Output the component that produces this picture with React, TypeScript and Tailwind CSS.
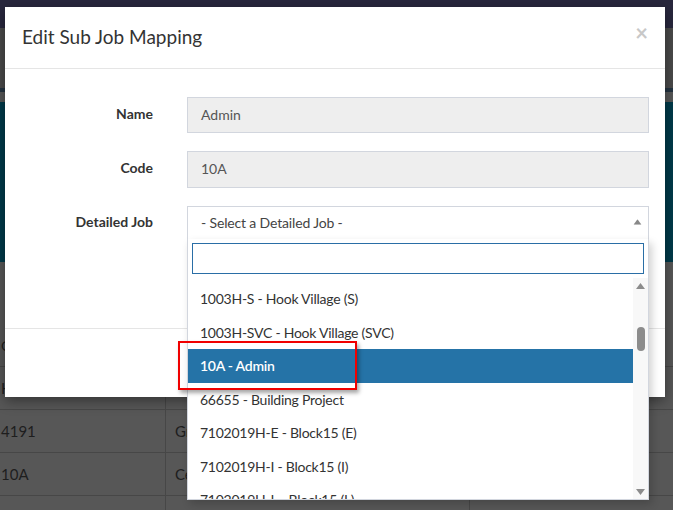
import React from 'react'

// Edit Sub Job Mapping modal, with the Detailed Job select opened over the page.

const options = [
  '1003H-S - Hook Village (S)',
  '1003H-SVC - Hook Village (SVC)',
  '10A - Admin',
  '66655 - Building Project',
  '7102019H-E - Block15 (E)',
  '7102019H-I - Block15 (I)',
  '7102019H-L - Block15 (L)',
]

const SELECTED = '10A - Admin'

function Backdrop() {
  return (
    <div className="flex flex-col">
      <div className="h-[28px] bg-[#28273d]" />
      <div className="h-[60px] bg-[#4a4a4a]" />
      <div className="h-[4px] bg-[#243341]" />
      <div className="h-[10px] bg-[#575757]" />
      <div className="h-[160px] bg-[#003a4a]" />
      <div className="h-[105px] bg-[#575757] border-b border-[#474747] flex items-end pb-[10px] text-[14px] text-[#1e1e1e]">
        <span className="pl-[1px]">C</span>
      </div>
      {[
        ['H', ''],
        ['4191', 'Gr'],
        ['10A', 'Ce'],
        ['', ''],
      ].map(([a, b], i) => (
        <div
          key={i}
          className="h-[43px] flex border-b border-[#474747] bg-[#575757] text-[15px] text-[#1e1e1e]"
        >
          <div className="w-[166px] flex items-center border-r border-[#474747] overflow-hidden">
            <span className="pl-[1px]">{a}</span>
          </div>
          <div className="w-[304px] flex items-center pl-[9px] border-r border-[#474747]">{b}</div>
          <div className="flex-1" />
        </div>
      ))}
    </div>
  )
}

function Triangle({ dir, className }: { dir: 'up' | 'down'; className?: string }) {
  return (
    <svg width="9" height="6" viewBox="0 0 9 6" className={className}>
      {dir === 'up' ? (
        <path d="M0 6 L4.5 0 L9 6 Z" fill="currentColor" />
      ) : (
        <path d="M0 0 L4.5 6 L9 0 Z" fill="currentColor" />
      )}
    </svg>
  )
}

function Dropdown() {
  return (
    <div className="absolute -left-px top-full w-[462px] h-[261px] bg-white border border-t-0 border-[#d2d6de] shadow-[3px_4px_8px_rgba(0,0,0,0.18)] flex flex-col">
      <div className="p-[4px]">
        <div className="h-[31px] border border-[#2a6ea6] bg-white" />
      </div>
      <div className="flex-1 flex overflow-hidden">
        <ul className="flex-1 pt-[4px] overflow-hidden tracking-[-0.25px]">
          {options.map((o) => (
            <li
              key={o}
              className={
                o === SELECTED
                  ? 'h-[33.5px] flex items-center pl-[12px] bg-[#2573a7] text-white font-semibold'
                  : 'h-[33.5px] flex items-center pl-[12px] text-[#333]'
              }
            >
              {o}
            </li>
          ))}
        </ul>
        <div className="w-[15px] bg-[#f8f8f8] flex flex-col items-center pt-[5px] pb-[4px] text-[#8c8c8c]">
          <Triangle dir="up" />
          <div className="mt-[38px] w-[8px] h-[24px] rounded-full bg-[#8c8c8c]" />
          <div className="flex-1" />
          <Triangle dir="down" />
        </div>
      </div>
    </div>
  )
}

export default function App() {
  return (
    <div
      className="relative w-[673px] h-[510px] overflow-hidden bg-[#575757] text-[14px]"
      style={{ fontFamily: 'Lato, "Open Sans", sans-serif' }}
    >
      <Backdrop />

      <div className="absolute left-[5px] top-[7px] w-[660px] h-[390px] bg-white shadow-[0_4px_12px_rgba(0,0,0,0.4)] flex flex-col">
        <div className="h-[62px] border-b border-[#e5e5e5] flex items-center justify-between pl-[17px] pr-[17px] shrink-0">
          <h4 className="text-[19px] text-[#333]">Edit Sub Job Mapping</h4>
          <span className="text-[22px] leading-none font-bold text-[#c8c8c8] -mt-[9px]">×</span>
        </div>

        <div className="h-[259px] pt-[28px] pr-[16px] shrink-0">
          <div className="grid grid-cols-[148px_1fr] gap-x-[34px] gap-y-[18px] items-center">
            <label className="text-right font-bold text-[#333] -mt-[4px]">Name</label>
            <div className="h-[36px] border border-[#d2d6de] bg-[#eeeeee] flex items-center px-[13px] pb-[2px] text-[#555]">
              Admin
            </div>

            <label className="text-right font-bold text-[#333] -mt-[4px]">Code</label>
            <div className="h-[37px] border border-[#d2d6de] bg-[#eeeeee] flex items-center px-[13px] pb-[2px] text-[#555]">
              10A
            </div>

            <label className="text-right font-bold text-[#333] -mt-[4px]">Detailed Job</label>
            <div className="relative h-[34px] border border-[#d2d6de] bg-white flex items-center justify-between pl-[13px] pr-[6px] pb-[2px] text-[#444] tracking-[-0.15px]">
              <span>- Select a Detailed Job -</span>
              <Triangle dir="up" className="text-[#888] scale-90" />
              <Dropdown />
            </div>
          </div>
        </div>

        <div className="flex-1 border-t border-[#e5e5e5]" />
      </div>

      {/* red highlight drawn around the selected option */}
      <div className="absolute left-[178px] top-[341px] w-[179px] h-[49px] border-2 border-[#f00000] shadow-[2px_3px_4px_rgba(0,0,0,0.35)]" />
    </div>
  )
}
